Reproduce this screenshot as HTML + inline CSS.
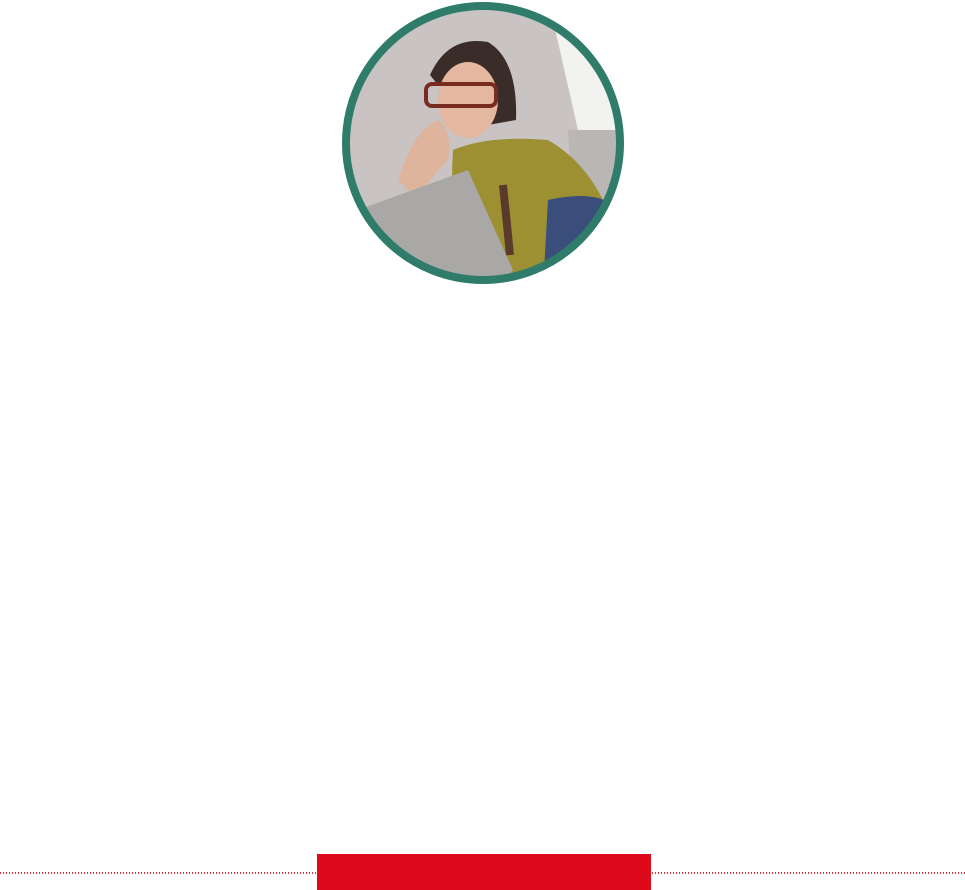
<!DOCTYPE html>
<html><head><style>
html,body{margin:0;padding:0;background:#fff;width:965px;height:890px;overflow:hidden;position:relative}
.dots{position:absolute;top:872px;height:2px;background:repeating-linear-gradient(90deg,#e0303c 0 1px,transparent 1px 3px)}
</style></head><body>
<svg style="position:absolute;left:338px;top:0" width="290" height="290" viewBox="0 0 290 290">
<defs><clipPath id="c"><circle cx="145" cy="143" r="137"/></clipPath></defs>
<g clip-path="url(#c)">
<rect width="290" height="290" fill="#c9c4c3"/>
<polygon points="215,20 290,20 290,130 240,130" fill="#f2f2f0"/>
<polygon points="230,130 290,130 290,290 240,290" fill="#b9b6b3"/>
<path d="M92,75 Q110,35 150,42 Q180,60 178,120 L150,125 Q140,80 100,85Z" fill="#3a2c28"/>
<ellipse cx="130" cy="100" rx="30" ry="38" fill="#e4b8a0"/>
<rect x="88" y="84" width="70" height="22" rx="6" fill="none" stroke="#7a2b20" stroke-width="4"/>
<path d="M115,150 Q150,135 210,140 Q245,160 265,200 L260,290 L130,290 Q110,230 115,150Z" fill="#9c9033"/>
<path d="M60,180 Q75,130 100,120 Q115,130 110,160 Q90,180 80,200Z" fill="#deb49c"/>
<path d="M210,200 Q255,190 275,205 L275,290 L205,290Z" fill="#3b4d7a"/>
<polygon points="20,210 130,170 175,270 160,290 20,290" fill="#a9a8a6"/>
<path d="M165,185 L172,255" stroke="#5a3a2a" stroke-width="8"/>
</g>
<circle cx="145" cy="143" r="137" fill="none" stroke="#2e7c69" stroke-width="8"/>
</svg>
<div class="dots" style="left:0;width:316px"></div>
<div class="dots" style="left:652px;width:313px"></div>
<div style="position:absolute;left:317px;top:854px;width:334px;height:36px;background:#dc0a1a"></div>
</body></html>
